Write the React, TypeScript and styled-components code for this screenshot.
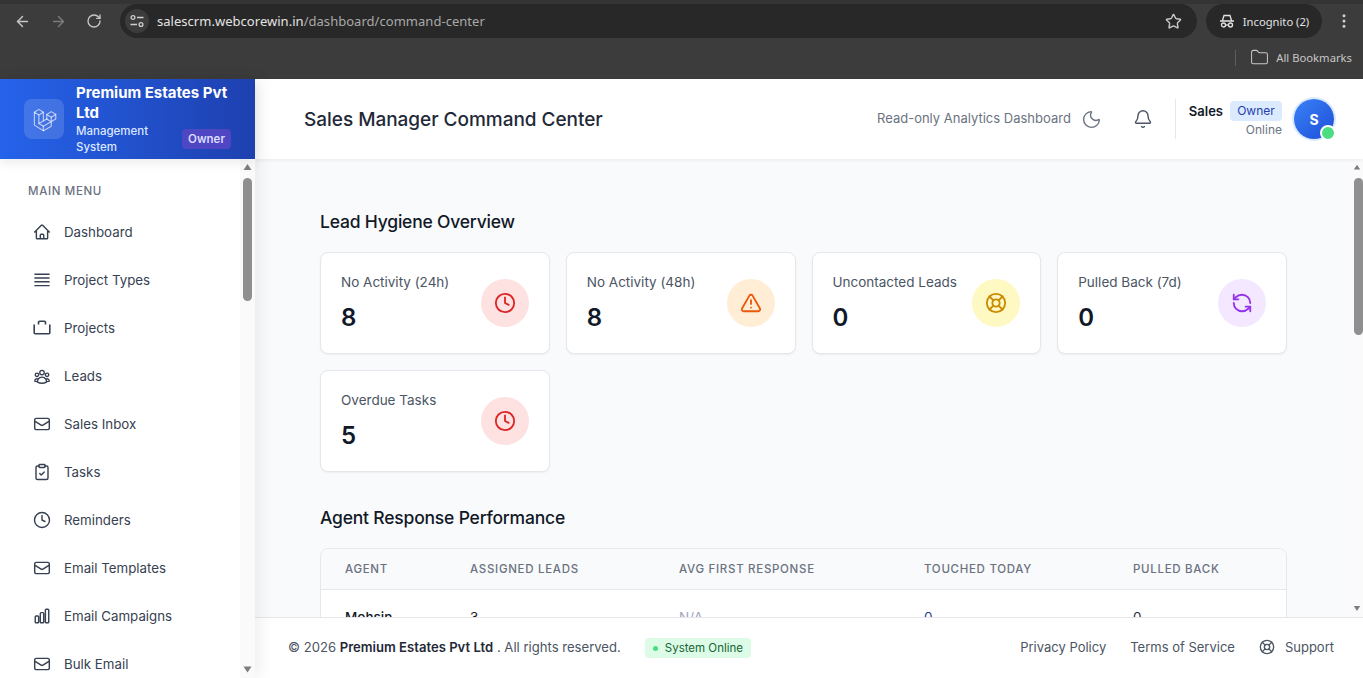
import React from "react";
import styled, { createGlobalStyle } from "styled-components";
import { ArrowLeft, ArrowRight, RotateCw, Star, MoreVertical, Folder, Moon, Bell, Clock, TriangleAlert, LifeBuoy, RefreshCcw, ClipboardCheck } from "lucide-react";
import { HiOutlineHome, HiOutlineUserGroup, HiOutlineEnvelope, HiOutlineChartBar } from "react-icons/hi2";
import { TbBrandLaravel } from "react-icons/tb";

const Global = createGlobalStyle`
  html, body { margin: 0; padding: 0; height: 100%; overflow: hidden; }
  body { font-family: Inter, "Liberation Sans", sans-serif; color: #111827; background: #fff; }
  * { box-sizing: border-box; }
`;

const Window = styled.div`
  display: flex; flex-direction: column; height: 678px; overflow: hidden;
`;
const BrowserChrome = styled.div`
  height: 79px; flex: none; background: #3c3c3c; border-top: 4px solid #343434;
  font-family: "Noto Sans", sans-serif; color: #e3e3e3;
`;
const TabRow = styled.div`
  display: flex; align-items: center; height: 34px; padding-left: 14px;
`;
const NavIcons = styled.div`
  display: flex; align-items: center; gap: 19px; width: 106px; flex: none;
`;
const NavButton = styled.span<{ $dim?: boolean }>`
  display: flex; color: ${p => (p.$dim ? "#7b7b7b" : "#c7c7c7")};
`;
const AddressBar = styled.div`
  width: 1077px; height: 34px; flex: none; display: flex; align-items: center;
  background: #282828; border-radius: 17px; padding: 0 15px 0 5px; font-size: 13px; letter-spacing: .03px;
`;
const SiteChip = styled.span`
  width: 24px; height: 24px; border-radius: 50%; background: #3c3c3c; display: flex; align-items: center; justify-content: center; margin-right: 8px;
`;
const Host = styled.span`color: #e3e3e3;`;
const Path = styled.span`color: #a8a8a8;`;
const AddressEnd = styled.span`margin-left: auto; display: flex; color: #c7c7c7;`;
const Profile = styled.div`
  margin-left: 9px; width: 116px; height: 34px; flex: none; border-radius: 17px; background: #282828;
  display: flex; align-items: center; justify-content: center; gap: 8px; font-size: 11.2px; color: #e3e3e3;
`;
const Menu3 = styled.span`margin-left: 13px; display: flex; color: #d0d0d0;`;
const BookmarkRow = styled.div`
  height: 37px; padding-top: 2px; display: flex; align-items: center; justify-content: flex-end; padding-right: 11px; font-size: 11.25px; color: #c7c7c7;
`;
const BookmarkDivider = styled.span`width: 1px; height: 16px; background: #5e5e5e; margin-right: 14px;`;
const BookmarkItem = styled.span`display: flex; align-items: center; gap: 7px;`;

const Body = styled.div`
  flex: 1; min-height: 0; display: grid; grid-template-columns: 255px 1fr;
`;
const Sidebar = styled.aside`
  display: flex; flex-direction: column; min-height: 0; background: #fff;
  position: relative; z-index: 3; box-shadow: 4px 0 16px rgba(0,0,0,.07);
`;
const Brand = styled.div`
  height: 80px; flex: none; display: flex; align-items: center; gap: 12px; padding: 0 24px;
  background: linear-gradient(90deg, #2563eb, #1e40af); color: #fff;
  box-shadow: 0 4px 10px rgba(0,0,0,.08); position: relative;
`;
const LogoTile = styled.div`
  width: 40px; height: 40px; flex: none; border-radius: 8px; background: rgba(255,255,255,.14);
  display: flex; align-items: center; justify-content: center; color: rgba(255,255,255,.65);
`;
const BrandText = styled.div`width: 155px; flex: none;`;
const BrandName = styled.div`font-size: 15px; font-weight: 700; line-height: 20px; letter-spacing: 0;`;
const BrandFoot = styled.div`display: flex; align-items: center; justify-content: space-between;`;
const BrandSub = styled.div`font-size: 11.5px; font-weight: 500; line-height: 16px; width: 86px; color: #dbe6ff;`;
const BrandBadge = styled.span`
  background: #4f46c4; color: #dcdcff; font-size: 11.5px; font-weight: 600; line-height: 20px; height: 20px; padding: 0 6px; border-radius: 4px;
`;
const SideRow = styled.div`flex: 1; min-height: 0; display: flex;`;
const SideNav = styled.nav`flex: 1; min-width: 0; overflow: hidden; padding: 24px 0 0 28px;`;
const MenuTitle = styled.div`
  font-size: 11.5px; font-weight: 500; letter-spacing: .65px; color: #6b7280; line-height: 16px; margin-bottom: 9px;
`;
const MenuItem = styled.div`
  height: 48px; flex: none; display: flex; align-items: center; gap: 13px; padding-left: 5px; font-size: 13.3px; color: #374151; white-space: nowrap;
`;
const MenuIcon = styled.span`
  width: 18px; height: 18px; display: flex; align-items: center; justify-content: center; color: #374151;
`;

const Rail = styled.div<{ $w: number }>`
  width: ${p => p.$w}px; flex: none; background: #fafafa; display: flex; flex-direction: column; overflow: hidden;
`;
const RailUp = styled.span`height: 19px; flex: none; display: flex;`;
const RailTrack = styled.div`flex: 1; min-height: 0; padding-left: 3px;`;
const RailThumb = styled.div<{ $h: number }>`
  width: 9px; height: ${p => p.$h}px; border-radius: 5px; background: #8f8f8f;
`;
const RailDown = styled.span`height: 17px; flex: none; display: flex;`;

const Column = styled.div`
  display: flex; flex-direction: column; min-height: 0; min-width: 0;
`;
const Header = styled.header`
  height: 80px; flex: none; background: #fff; display: flex; align-items: center; justify-content: space-between;
  padding: 0 29px 0 49px; position: relative; z-index: 2; box-shadow: 0 1px 4px rgba(0,0,0,.07);
`;
const PageTitle = styled.h1`
  margin: 0; font-size: 19px; font-weight: 500; color: #1f2937; letter-spacing: -.03px;
`;
const HeaderRight = styled.div`display: flex; align-items: center;`;
const Caption = styled.span`font-size: 13px; color: #6b7280; margin: 0 10px 2px 0;`;
const HeadIcon = styled.span`display: flex; color: #6b7280;`;
const BellWrap = styled.span`display: flex; color: #4b5563; margin-left: 31px; margin-right: 22px;`;
const UserBlock = styled.div`
  border-left: 1px solid #e5e7eb; height: 40px; padding-left: 13px; display: flex; flex-direction: column; align-items: flex-end; margin-right: 12px;
`;
const UserTop = styled.div`display: flex; align-items: center; gap: 7px; height: 22px; margin-top: 1px;`;
const UserName = styled.span`font-size: 13px; font-weight: 600; color: #111827;`;
const RoleBadge = styled.span`
  background: #dbeafe; color: #1e40af; font-size: 12px; line-height: 20px; height: 20px; padding: 0 6px; border-radius: 4px; width: 52px; text-align: center;
`;
const UserStatus = styled.span`font-size: 12px; color: #6b7280; margin-top: 1px; line-height: 14px;`;
const Avatar = styled.div`
  width: 40px; height: 40px; border-radius: 50%; position: relative; background: linear-gradient(135deg, #3b82f6, #1d4ed8);
  box-shadow: 0 0 0 2px #dbeafe; color: #fff; font-size: 14px; font-weight: 700; display: flex; align-items: center; justify-content: center;
`;
const OnlineDot = styled.span`
  position: absolute; right: -2px; bottom: -2px; width: 16px; height: 16px; border-radius: 50%; background: #4ade80; border: 2px solid #fff;
`;

const MainRow = styled.div`flex: 1; min-height: 0; display: flex; background: #f9fafb;`;
const MainScroll = styled.main`
  flex: 1; min-width: 0; overflow: hidden; padding: 49px 64px 0 65px;
`;
const SectionTitle = styled.h2`
  margin: 0 0 16px; font-size: 17.5px; font-weight: 500; line-height: 28px; color: #111827; letter-spacing: -.2px;
`;
const CardGrid = styled.div`
  display: grid; grid-template-columns: repeat(4, 1fr); gap: 16px; margin-bottom: 32px;
`;
const Card = styled.div`
  height: 102px; background: #fff; border: 1px solid #e5e7eb; border-radius: 8px; padding: 0 20px;
  display: flex; align-items: center; justify-content: space-between; box-shadow: 0 1px 2px rgba(0,0,0,.05);
`;
const CardLabel = styled.div`font-size: 13.5px; color: #4b5563; line-height: 20px;`;
const CardValue = styled.div`font-size: 24px; font-weight: 600; color: #111827; line-height: 32px; margin-top: 10px;`;
const IconCircle = styled.div<{ $bg: string; $fg: string }>`
  width: 48px; height: 48px; border-radius: 50%; background: ${p => p.$bg}; color: ${p => p.$fg};
  display: flex; align-items: center; justify-content: center; flex: none;
`;
const TableCard = styled.div`
  background: #fff; border: 1px solid #e5e7eb; border-radius: 8px 8px 0 0; overflow: hidden;
`;
const Table = styled.table`
  width: 100%; border-collapse: collapse; table-layout: fixed;
`;
const Th = styled.th<{ $w: number }>`
  width: ${p => p.$w}px; height: 40px; padding: 0 0 0 24px; text-align: left; background: #f9fafb; border-bottom: 1px solid #e5e7eb;
  font-size: 11.5px; font-weight: 500; letter-spacing: .7px; color: #6b7280; text-transform: uppercase; white-space: nowrap;
`;
const Td = styled.td<{ $tone?: string; $bold?: boolean }>`
  padding: 17px 0 17px 24px; font-size: 13.5px; line-height: 20px; color: ${p => p.$tone || "#111827"}; font-weight: ${p => (p.$bold ? 500 : 400)};
`;

const Footer = styled.footer`
  height: 61px; flex: none; background: #fff; border-top: 1px solid #e5e7eb; display: flex; align-items: center; justify-content: space-between;
  padding: 0 29px 2px 33px; position: relative; z-index: 2; font-size: 13.1px; color: #4b5563;
`;
const FootLeft = styled.div`display: flex; align-items: center;`;
const Company = styled.strong`font-weight: 600; color: #1f2937;`;
const SystemPill = styled.span`
  margin: 2px 0 0 24px; display: flex; align-items: center; gap: 7px; height: 20px; padding: 0 8px; border-radius: 4px; background: #dcfce7; color: #166534; font-size: 11.5px;
`;
const PillDot = styled.span`width: 5px; height: 5px; border-radius: 50%; background: #4ade80;`;
const FootLinks = styled.div`display: flex; align-items: center; gap: 24px; font-size: 13px;`;
const FootLink = styled.span`display: flex; align-items: center; gap: 10px;`;

const Triangle = ({ down }: { down?: boolean }) => (
  <svg width="15" height="17" viewBox="0 0 15 17" fill="#7d7d7d">
    <path d={down ? "M3.500 5.500h8l-4 6z" : "M3.500 11h8l-4-6z"} />
  </svg>
);

const ScrollRail = ({ width, thumb }: { width: number; thumb: number }) => (
  <Rail $w={width}>
    <RailUp><Triangle /></RailUp>
    <RailTrack><RailThumb $h={thumb} /></RailTrack>
    <RailDown><Triangle down /></RailDown>
  </Rail>
);

const menu: [string, React.ReactNode][] = [
  ["Dashboard", <HiOutlineHome size={20} strokeWidth={1.9} />],
  ["Project Types", <svg width="18" height="18" viewBox="0 0 18 18" stroke="currentColor" strokeWidth="1.4"><path d="M1.400 3.200h15.200M1.400 7h15.200M1.400 10.800h15.200M1.400 14.600h15.200" /></svg>],
  ["Projects", <svg width="18" height="18" viewBox="0 0 18 18" fill="none" stroke="currentColor" strokeWidth="1.6" strokeLinejoin="round"><path d="M5.500 5.500V3.500a1.200 1.200 0 0 1 1.200-1.200h4.600a1.200 1.200 0 0 1 1.200 1.200v2M1.200 5.500v8.300a1 1 0 0 0 1 1h13.600a1 1 0 0 0 1-1V5.500" /></svg>],
  ["Leads", <HiOutlineUserGroup size={23} strokeWidth={1.8} />],
  ["Sales Inbox", <HiOutlineEnvelope size={20} strokeWidth={1.9} />],
  ["Tasks", <ClipboardCheck size={20} strokeWidth={1.9} />],
  ["Reminders", <Clock size={20} strokeWidth={1.9} />],
  ["Email Templates", <HiOutlineEnvelope size={20} strokeWidth={1.9} />],
  ["Email Campaigns", <HiOutlineChartBar size={20} strokeWidth={1.9} />],
  ["Bulk Email", <HiOutlineEnvelope size={20} strokeWidth={1.9} />],
];

const cards = [
  { label: "No Activity (24h)", value: 8, bg: "#fee2e2", fg: "#dc2626", icon: <Clock size={22} /> },
  { label: "No Activity (48h)", value: 8, bg: "#ffedd5", fg: "#ea580c", icon: <TriangleAlert size={22} /> },
  { label: "Uncontacted Leads", value: 0, bg: "#fef9c3", fg: "#ca8a04", icon: <LifeBuoy size={22} /> },
  { label: "Pulled Back (7d)", value: 0, bg: "#f3e8ff", fg: "#9333ea", icon: <RefreshCcw size={22} /> },
  { label: "Overdue Tasks", value: 5, bg: "#fee2e2", fg: "#dc2626", icon: <Clock size={22} /> },
];

export default function App() {
  return (
    <Window>
      <Global />
      <BrowserChrome>
        <TabRow>
          <NavIcons>
            <NavButton><ArrowLeft size={17} /></NavButton>
            <NavButton $dim><ArrowRight size={17} /></NavButton>
            <NavButton><RotateCw size={16} /></NavButton>
          </NavIcons>
          <AddressBar>
            <SiteChip>
              <svg width="16" height="16" viewBox="0 0 16 16" fill="none" stroke="#d0d0d0" strokeWidth="1.3"><circle cx="4" cy="4.500" r="1.900" /><path d="M8 4.500h6.500M1.500 11.500H8" /><circle cx="12" cy="11.500" r="1.900" /></svg>
            </SiteChip>
            <span><Host>salescrm.webcorewin.in</Host><Path>/dashboard/command-center</Path></span>
            <AddressEnd><Star size={17} /></AddressEnd>
          </AddressBar>
          <Profile>
            <svg width="16" height="16" viewBox="0 0 16 16" fill="none" stroke="#e3e3e3" strokeWidth="1.300"><path d="M1 8h14M3.500 7.500 5 2.500h6l1.500 5" /><circle cx="4.500" cy="12" r="2" /><circle cx="11.500" cy="12" r="2" /><path d="M6.500 12h3" /></svg>
            Incognito (2)
          </Profile>
          <Menu3><MoreVertical size={18} /></Menu3>
        </TabRow>
        <BookmarkRow>
          <BookmarkDivider />
          <BookmarkItem><Folder size={19} strokeWidth={1.3} />All Bookmarks</BookmarkItem>
        </BookmarkRow>
      </BrowserChrome>
      <Body>
        <Sidebar>
          <Brand>
            <LogoTile><TbBrandLaravel size={27} strokeWidth={1} /></LogoTile>
            <BrandText>
              <BrandName>Premium Estates Pvt Ltd</BrandName>
              <BrandFoot>
                <BrandSub>Management System</BrandSub>
                <BrandBadge>Owner</BrandBadge>
              </BrandFoot>
            </BrandText>
          </Brand>
          <SideRow>
            <SideNav>
              <MenuTitle>MAIN MENU</MenuTitle>
              {menu.map(([label, icon]) => (
                <MenuItem key={label}><MenuIcon>{icon}</MenuIcon>{label}</MenuItem>
              ))}
            </SideNav>
            <ScrollRail width={15} thumb={123} />
          </SideRow>
        </Sidebar>
        <Column>
          <Header>
            <PageTitle>Sales Manager Command Center</PageTitle>
            <HeaderRight>
              <Caption>Read-only Analytics Dashboard</Caption>
              <HeadIcon><Moon size={21} strokeWidth={1.6} /></HeadIcon>
              <BellWrap><Bell size={20} strokeWidth={1.7} /></BellWrap>
              <UserBlock>
                <UserTop><UserName>Sales</UserName><RoleBadge>Owner</RoleBadge></UserTop>
                <UserStatus>Online</UserStatus>
              </UserBlock>
              <Avatar>S<OnlineDot /></Avatar>
            </HeaderRight>
          </Header>
          <MainRow>
            <MainScroll>
              <SectionTitle>Lead Hygiene Overview</SectionTitle>
              <CardGrid>
                {cards.map(c => (
                  <Card key={c.label}>
                    <div>
                      <CardLabel>{c.label}</CardLabel>
                      <CardValue>{c.value}</CardValue>
                    </div>
                    <IconCircle $bg={c.bg} $fg={c.fg}>{c.icon}</IconCircle>
                  </Card>
                ))}
              </CardGrid>
              <SectionTitle>Agent Response Performance</SectionTitle>
              <TableCard>
                <Table>
                  <thead>
                    <tr>
                      <Th $w={125}>Agent</Th>
                      <Th $w={209}>Assigned Leads</Th>
                      <Th $w={245}>Avg First Response</Th>
                      <Th $w={209}>Touched Today</Th>
                      <Th $w={177}>Pulled Back</Th>
                    </tr>
                  </thead>
                  <tbody>
                    <tr>
                      <Td $bold>Mohsin</Td>
                      <Td>3</Td>
                      <Td $tone="#a5a3c0">N/A</Td>
                      <Td $tone="#1e3a8a">0</Td>
                      <Td $tone="#1f2937">0</Td>
                    </tr>
                  </tbody>
                </Table>
              </TableCard>
            </MainScroll>
            <ScrollRail width={12} thumb={157} />
          </MainRow>
          <Footer>
            <FootLeft>
              <span>© 2026 <Company>Premium Estates Pvt Ltd</Company> . All rights reserved.</span>
              <SystemPill><PillDot />System Online</SystemPill>
            </FootLeft>
            <FootLinks>
              <FootLink>Privacy Policy</FootLink>
              <FootLink>Terms of Service</FootLink>
              <FootLink><LifeBuoy size={16} />Support</FootLink>
            </FootLinks>
          </Footer>
        </Column>
      </Body>
    </Window>
  );
}
